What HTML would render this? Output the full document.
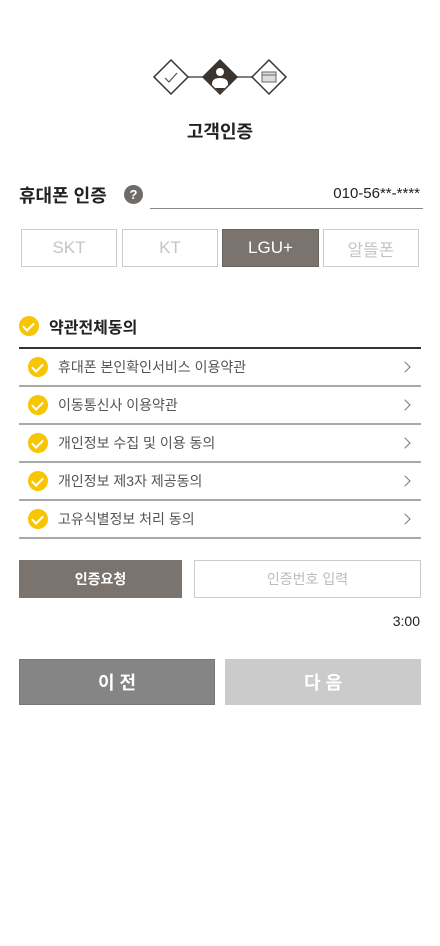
<!DOCTYPE html>
<html><head><meta charset="utf-8"><style>
*{margin:0;padding:0;box-sizing:border-box}
body{width:440px;height:946px;background:#fff;position:relative;font-family:"Liberation Sans","Noto Sans CJK KR",sans-serif;overflow:hidden}
.a{position:absolute}
.btn{position:absolute;display:flex;align-items:center;justify-content:center}
.car{top:229px;height:38px;border:1px solid #ccc;color:#c4c4c4;font-size:17px}
.row{position:absolute;left:19px;width:402px;height:38px;border-bottom:2px solid #a8a8a8;display:flex;align-items:center}
.row span{color:#555;font-size:14px;margin-left:10px}
.ck{width:20px;height:20px;border-radius:50%;background:#f7c600;display:inline-block;position:relative;flex:none;margin-left:9px}
.ck:after{content:"";position:absolute;left:6px;top:4px;width:5px;height:9px;border:solid #fff;border-width:0 2px 2px 0;transform:rotate(45deg)}
.chev{position:absolute;right:12px;top:14px;width:8px;height:8px;border:solid #777;border-width:1px 1px 0 0;transform:rotate(45deg)}
</style></head><body>
<svg class="a" style="left:0;top:0" width="440" height="110">
<defs><clipPath id="cp"><polygon points="220,61 236,77 220,93 204,77"/></clipPath></defs>
<line x1="188" y1="77" x2="203" y2="77" stroke="#555" stroke-width="1.5"/>
<line x1="237" y1="77" x2="252" y2="77" stroke="#555" stroke-width="1.5"/>
<polygon points="171,60 188,77 171,94 154,77" fill="#fff" stroke="#3a332e" stroke-width="1.5"/>
<polyline points="165,78 169,82 177,73" fill="none" stroke="#555" stroke-width="1.2"/>
<polygon points="220,60 237,77 220,94 203,77" fill="#3b342e" stroke="#3b342e" stroke-width="1.5"/>
<g clip-path="url(#cp)">
<circle cx="220" cy="72" r="4" fill="#fff"/>
<path d="M212 92 L212 84 Q212 78 220 78 Q228 78 228 84 L228 92 Z" fill="#fff"/>
<polygon points="220,94 214,88 226,88" fill="#3b342e"/>
</g>
<polygon points="269,60 286,77 269,94 252,77" fill="#fff" stroke="#3a332e" stroke-width="1.5"/>
<rect x="262" y="72" width="14" height="10" fill="#ddd" stroke="#666" stroke-width="1"/>
<line x1="262" y1="75" x2="276" y2="75" stroke="#666"/>
</svg>
<div class="a" style="left:0;width:440px;top:118px;text-align:center;font-size:18px;font-weight:bold;color:#222">고객인증</div>
<div class="a" style="left:19px;top:182px;font-size:18px;font-weight:bold;color:#222">휴대폰 인증</div>
<div class="a" style="left:124px;top:185px;width:19px;height:19px;border-radius:50%;background:#6f6b68;color:#fff;font-size:13px;font-weight:bold;text-align:center;line-height:19px">?</div>
<div class="a" style="right:20px;top:185px;font-size:15px;color:#222">010-56**-****</div>
<div class="a" style="left:150px;top:208px;width:273px;height:1px;background:#888"></div>
<div class="btn car" style="left:21px;width:96px">SKT</div>
<div class="btn car" style="left:122px;width:96px">KT</div>
<div class="btn car" style="left:222px;width:97px;background:#7a736e;border-color:#6a645f;color:#fff">LGU+</div>
<div class="btn car" style="left:323px;width:96px">알뜰폰</div>
<div class="a" style="left:18px;top:314px;display:flex;align-items:center"><i class="ck" style="margin-left:1px"></i><b style="margin-left:10px;font-size:16px;color:#222">약관전체동의</b></div>
<div class="a" style="left:19px;top:347px;width:402px;height:2px;background:#333"></div>
<div class="row" style="top:349px"><i class="ck"></i><span>휴대폰 본인확인서비스 이용약관</span><i class="chev"></i></div>
<div class="row" style="top:387px"><i class="ck"></i><span>이동통신사 이용약관</span><i class="chev"></i></div>
<div class="row" style="top:425px"><i class="ck"></i><span>개인정보 수집 및 이용 동의</span><i class="chev"></i></div>
<div class="row" style="top:463px"><i class="ck"></i><span>개인정보 제3자 제공동의</span><i class="chev"></i></div>
<div class="row" style="top:501px"><i class="ck"></i><span>고유식별정보 처리 동의</span><i class="chev"></i></div>
<div class="btn" style="left:19px;top:560px;width:163px;height:38px;background:#7a736e;color:#fff;font-size:14px;font-weight:bold">인증요청</div>
<div class="btn" style="left:194px;top:560px;width:227px;height:38px;border:1px solid #ccc;color:#bbb;font-size:14px">인증번호 입력</div>
<div class="a" style="right:20px;top:613px;font-size:14px;color:#222">3:00</div>
<div class="btn" style="left:19px;top:659px;width:196px;height:46px;background:#858585;border:1px solid #777;color:#fff;font-size:18px;font-weight:bold">이 전</div>
<div class="btn" style="left:225px;top:659px;width:196px;height:46px;background:#cbcbcb;color:#fff;font-size:18px;font-weight:bold">다 음</div>
</body></html>
